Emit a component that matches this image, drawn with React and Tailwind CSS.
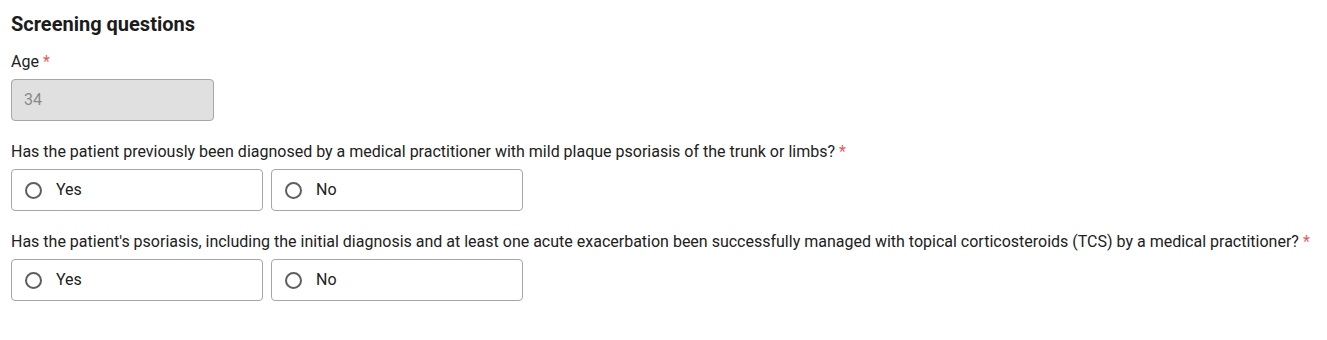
import React from "react";

const Required = () => <span className="ml-1 text-[#f0585a]">*</span>;

const RadioOption = ({ label }) => (
  <label className="flex h-[42px] w-[252px] items-center gap-[14px] rounded-[4px] border border-[#a6a6a6] bg-white pl-[13px]">
    <span className="h-[17px] w-[17px] rounded-full border-2 border-[#5f5f5f]" />
    <span className="text-[16px] text-[#212121]">{label}</span>
  </label>
);

const Question = ({ text }) => (
  <div className="mt-[19px]">
    <p className="text-[16px] leading-6 text-[#212121]">
      {text}
      <Required />
    </p>
    <div className="mt-[5px] flex gap-2">
      <RadioOption label="Yes" />
      <RadioOption label="No" />
    </div>
  </div>
);

export default function App() {
  return (
    <div className="min-h-[340px] bg-white px-[11px] pt-3 font-['Roboto',sans-serif]">
      {/* Header */}
      <h2 className="text-[20px] font-bold leading-6 text-[#1c1c1c]">Screening questions</h2>

      {/* Age */}
      <div className="mt-[14px]">
        <p className="text-[16px] leading-6 text-[#212121]">
          Age
          <Required />
        </p>
        <div className="mt-[5px] flex h-[42px] w-[203px] items-center rounded-[4px] border border-[#a6a6a6] bg-[#e0e0e0] px-3 text-[16px] text-[#8a8a8a]">
          34
        </div>
      </div>

      <Question text="Has the patient previously been diagnosed by a medical practitioner with mild plaque psoriasis of the trunk or limbs?" />
      <Question text="Has the patient's psoriasis, including the initial diagnosis and at least one acute exacerbation been successfully managed with topical corticosteroids (TCS) by a medical practitioner?" />
    </div>
  );
}
